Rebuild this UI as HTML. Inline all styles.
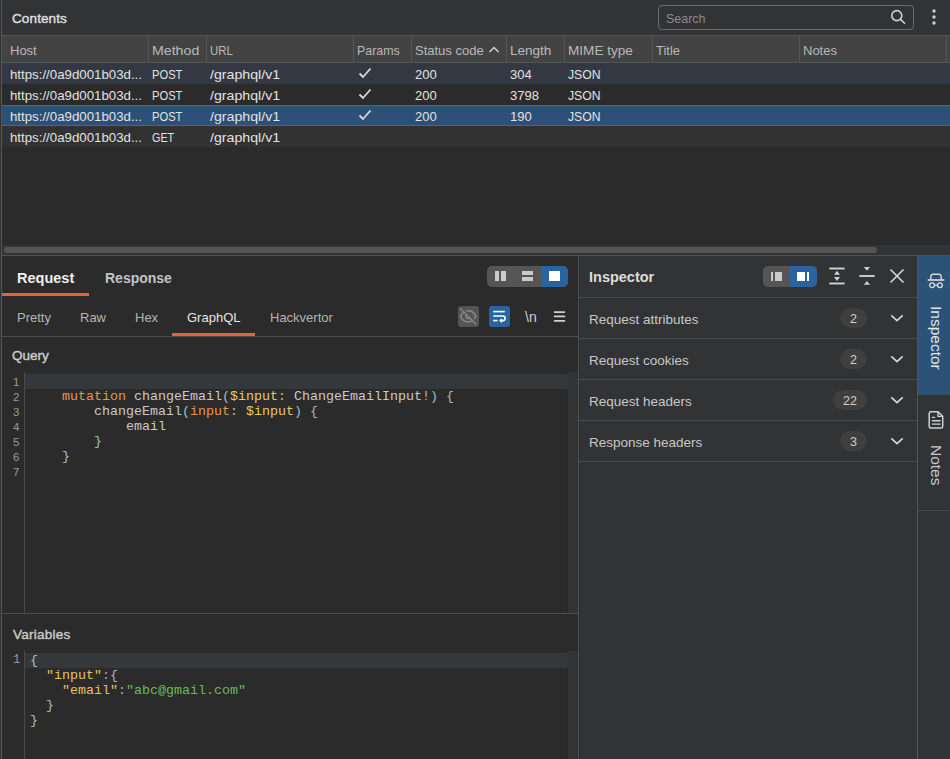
<!DOCTYPE html>
<html><head><meta charset="utf-8">
<style>
*{margin:0;padding:0;box-sizing:border-box}
html,body{width:950px;height:759px;overflow:hidden;background:#2b2b2b;font-family:"Liberation Sans",sans-serif;color:#d4d4d4}
.a{position:absolute}
.t{position:absolute;white-space:pre;line-height:1}
.sb{-webkit-text-stroke:0.45px currentColor}
.hl{position:absolute;background:#4a4a4a}
.vl{position:absolute;background:#4a4a4a}
.code{position:absolute;font-family:"Liberation Mono",monospace;font-size:13.33px;line-height:15px;white-space:pre;color:#c9c9c9}
.ln{position:absolute;font-family:"Liberation Sans",sans-serif;font-size:12px;line-height:15px;color:#9a9a9a;text-align:left}
.kw{color:#e9934f}
.var{color:#e9c86a}
.pn{color:#a6bacb}
.cg{color:#a8a8a8}
.key{color:#e8c062}
.str{color:#6db85c}
</style></head>
<body>
<!-- top bar -->
<div class="a" style="left:0;top:0;width:950px;height:35px;background:#323335"></div>
<div class="t sb" style="left:12px;top:12px;font-size:13.5px;letter-spacing:0.12px;color:#dcdcdc">Contents</div>
<div class="a" style="left:658px;top:5px;width:256px;height:25px;border:1px solid #6b6b6b;border-radius:4px"></div>
<div class="t" style="left:666px;top:12px;font-size:13px;color:#8c8c8c;transform:scaleX(0.96);transform-origin:0 0">Search</div>
<svg class="a" style="left:888px;top:8px" width="20" height="20" viewBox="0 0 20 20"><circle cx="8.8" cy="7.6" r="5" fill="none" stroke="#d0d0d0" stroke-width="1.6"/><line x1="12.6" y1="11.4" x2="17" y2="15.8" stroke="#d0d0d0" stroke-width="1.6"/></svg>
<svg class="a" style="left:930px;top:7px" width="8" height="20" viewBox="0 0 8 20"><g fill="#d0d0d0"><circle cx="4" cy="4" r="1.7"/><circle cx="4" cy="10" r="1.7"/><circle cx="4" cy="16" r="1.7"/></g></svg>

<!-- table header -->
<div class="a" style="left:2px;top:35px;width:948px;height:28px;background:#434343;border-top:1px solid #555;border-bottom:1px solid #555"></div>
<div class="vl" style="left:148px;top:36px;width:1px;height:26px;background:#555"></div>
<div class="vl" style="left:206px;top:36px;width:1px;height:26px;background:#555"></div>
<div class="vl" style="left:353px;top:36px;width:1px;height:26px;background:#555"></div>
<div class="vl" style="left:411px;top:36px;width:1px;height:26px;background:#555"></div>
<div class="vl" style="left:506px;top:36px;width:1px;height:26px;background:#555"></div>
<div class="vl" style="left:564px;top:36px;width:1px;height:26px;background:#555"></div>
<div class="vl" style="left:652px;top:36px;width:1px;height:26px;background:#555"></div>
<div class="vl" style="left:799px;top:36px;width:1px;height:26px;background:#555"></div>
<div class="vl" style="left:946px;top:36px;width:1px;height:26px;background:#555"></div>
<div style="position:absolute;left:0;top:44px;font-size:13px;color:#b9b9b9;line-height:1">
<span class="t" style="left:10px">Host</span>
<span class="t" style="left:152px;transform:scaleX(1.09);transform-origin:0 0">Method</span>
<span class="t" style="left:210px;transform:scaleX(0.88);transform-origin:0 0">URL</span>
<span class="t" style="left:357px;transform:scaleX(0.955);transform-origin:0 0">Params</span>
<span class="t" style="left:415px">Status code</span>
<span class="t" style="left:510px;transform:scaleX(1.04);transform-origin:0 0">Length</span>
<span class="t" style="left:568px;transform:scaleX(1.045);transform-origin:0 0">MIME type</span>
<span class="t" style="left:656px">Title</span>
<span class="t" style="left:803px">Notes</span>
</div>
<svg class="a" style="left:488px;top:45px" width="12" height="10" viewBox="0 0 12 10"><polyline points="1.5,7 6,2.5 10.5,7" fill="none" stroke="#d0d0d0" stroke-width="1.5"/></svg>

<!-- rows -->
<div class="a" style="left:2px;top:63px;width:948px;height:21px;background:#333843"></div>
<div class="a" style="left:2px;top:105px;width:948px;height:21px;background:#2c5078;border-top:1px solid #2f6cb0;border-bottom:1px solid #2f6cb0"></div>
<div class="a" style="left:2px;top:126px;width:948px;height:21px;background:#323232"></div>

<div style="position:absolute;left:0;top:68px;font-size:13px;color:#e2e2e2">
<span class="t" style="left:10px;top:0px;transform:scaleX(1.02);transform-origin:0 0">https://0a9d001b03d...</span><span class="t" style="left:152px;top:0px;transform:scaleX(0.86);transform-origin:0 0">POST</span><span class="t" style="left:210px;top:0px;transform:scaleX(1.09);transform-origin:0 0">/graphql/v1</span><span class="t" style="left:415px;top:0px">200</span><span class="t" style="left:510px;top:0px">304</span><span class="t" style="left:568px;top:0px;transform:scaleX(0.94);transform-origin:0 0">JSON</span>
<span class="t" style="left:10px;top:21px;transform:scaleX(1.02);transform-origin:0 0">https://0a9d001b03d...</span><span class="t" style="left:152px;top:21px;transform:scaleX(0.86);transform-origin:0 0">POST</span><span class="t" style="left:210px;top:21px;transform:scaleX(1.09);transform-origin:0 0">/graphql/v1</span><span class="t" style="left:415px;top:21px">200</span><span class="t" style="left:510px;top:21px">3798</span><span class="t" style="left:568px;top:21px;transform:scaleX(0.94);transform-origin:0 0">JSON</span>
<span class="t" style="left:10px;top:42px;transform:scaleX(1.02);transform-origin:0 0">https://0a9d001b03d...</span><span class="t" style="left:152px;top:42px;transform:scaleX(0.86);transform-origin:0 0">POST</span><span class="t" style="left:210px;top:42px;transform:scaleX(1.09);transform-origin:0 0">/graphql/v1</span><span class="t" style="left:415px;top:42px">200</span><span class="t" style="left:510px;top:42px">190</span><span class="t" style="left:568px;top:42px;transform:scaleX(0.94);transform-origin:0 0">JSON</span>
<span class="t" style="left:10px;top:63px;transform:scaleX(1.02);transform-origin:0 0">https://0a9d001b03d...</span><span class="t" style="left:152px;top:63px;transform:scaleX(0.83);transform-origin:0 0">GET</span><span class="t" style="left:210px;top:63px;transform:scaleX(1.09);transform-origin:0 0">/graphql/v1</span>
</div>
<svg class="a" style="left:358px;top:67px" width="14" height="12" viewBox="0 0 14 12"><polyline points="1.5,6.5 5,10 12.5,1.5" fill="none" stroke="#d8d8d8" stroke-width="1.8"/></svg>
<svg class="a" style="left:358px;top:88px" width="14" height="12" viewBox="0 0 14 12"><polyline points="1.5,6.5 5,10 12.5,1.5" fill="none" stroke="#d8d8d8" stroke-width="1.8"/></svg>
<svg class="a" style="left:358px;top:109px" width="14" height="12" viewBox="0 0 14 12"><polyline points="1.5,6.5 5,10 12.5,1.5" fill="none" stroke="#d8d8d8" stroke-width="1.8"/></svg>

<!-- scrollbar -->
<div class="a" style="left:2px;top:245px;width:948px;height:10px;background:#323335"></div>
<div class="a" style="left:4px;top:247px;width:873px;height:6px;border-radius:3px;background:#555"></div>

<!-- left border -->
<div class="a" style="left:0;top:0;width:1px;height:759px;background:#313235"></div><div class="a" style="left:1px;top:0;width:1px;height:759px;background:#555"></div>

<!-- horizontal divider -->
<div class="a" style="left:2px;top:255px;width:948px;height:1px;background:#4e4e4e"></div>

<!-- ===== Request panel ===== -->
<div class="t" style="left:17px;top:271px;font-size:14.5px;font-weight:700;color:#f0f0f0">Request</div>
<div class="t" style="left:105px;top:271px;font-size:14px;font-weight:700;color:#c0c4c8">Response</div>
<div class="a" style="left:2px;top:293px;width:87px;height:3px;background:#e0672f"></div>

<!-- layout toggle -->
<div class="a" style="left:487px;top:266px;width:81px;height:21px;border-radius:5px;background:#555;overflow:hidden">
  <div class="a" style="left:54px;top:0;width:27px;height:21px;background:#2a64a0"></div>
  <div class="a" style="left:8px;top:5px;width:4px;height:10px;background:#cacaca"></div>
  <div class="a" style="left:14px;top:5px;width:5px;height:10px;background:#cacaca"></div>
  <div class="a" style="left:35px;top:5px;width:11px;height:4px;background:#cacaca"></div>
  <div class="a" style="left:35px;top:11px;width:11px;height:4px;background:#cacaca"></div>
  <div class="a" style="left:62px;top:5px;width:11px;height:10px;background:#fff"></div>
</div>

<!-- sub tabs -->
<div style="position:absolute;left:0;top:311px;font-size:13px;color:#b4b4b4">
<span class="t" style="left:17px">Pretty</span>
<span class="t" style="left:80px">Raw</span>
<span class="t" style="left:135px">Hex</span>
<span class="t" style="left:187px;color:#e6e6e6">GraphQL</span>
<span class="t" style="left:270px">Hackvertor</span>
</div>
<div class="a" style="left:172px;top:333px;width:83px;height:3px;background:#e0672f"></div>
<div class="a" style="left:2px;top:336px;width:576px;height:1px;background:#4e4e4e"></div>

<!-- editor icons -->
<div class="a" style="left:458px;top:306px;width:21px;height:21px;border-radius:3px;background:#555"></div>
<svg class="a" style="left:458px;top:306px" width="21" height="21" viewBox="0 0 21 21"><g transform="translate(1.7,1.93) scale(0.7045)" fill="none" stroke="#8c8c8c" stroke-width="1.85" stroke-linecap="round" stroke-linejoin="round"><path d="M17.94 17.94A10.07 10.07 0 0 1 12 20c-7 0-11-8-11-8a18.45 18.45 0 0 1 5.06-5.940M9.9 4.24A9.12 9.12 0 0 1 12 4c7 0 11 8 11 8a18.5 18.5 0 0 1-2.16 3.19m-6.72-1.07a3 3 0 1 1-4.24-4.24"/><line x1="1" y1="1" x2="23" y2="23"/></g></svg>
<div class="a" style="left:489px;top:306px;width:21px;height:21px;border-radius:3px;background:#2a64a0"></div>
<svg class="a" style="left:489px;top:306px" width="21" height="21" viewBox="0 0 21 21"><g fill="none" stroke="#fff" stroke-width="1.6"><line x1="4.2" y1="5.6" x2="15.9" y2="5.6"/><path d="M4.2 10 H13.8 A2.3 2.3 0 0 1 13.8 14.6 H11.4"/><line x1="4.2" y1="14.6" x2="8.6" y2="14.6"/><polyline points="12.9,12.9 11.2,14.6 12.9,16.3" stroke-width="1.4"/></g></svg>
<div class="a" style="left:520px;top:306px;width:21px;height:21px;border:1px dashed #2f2f2f;border-radius:2px"></div><div class="t" style="left:525px;top:310px;font-size:14px;color:#d0d0d0">\n</div>
<svg class="a" style="left:552px;top:308px" width="16" height="16" viewBox="0 0 16 16"><g stroke="#d0d0d0" stroke-width="1.7" stroke-linecap="round"><line x1="2.6" y1="4.1" x2="12.4" y2="4.1"/><line x1="2.6" y1="8.4" x2="12.4" y2="8.4"/><line x1="2.6" y1="12.9" x2="12.4" y2="12.9"/></g></svg>

<!-- Query -->
<div class="t sb" style="left:12px;top:349px;font-size:13.5px;color:#c8c8c8">Query</div>
<div class="a" style="left:24px;top:372px;width:1px;height:241px;background:#4a4a4a"></div>
<div class="a" style="left:567px;top:372px;width:11px;height:241px;background:#323335;border-left:1px solid #282828"></div>
<div class="a" style="left:25px;top:374px;width:543px;height:15px;background:#34383b"></div>
<div class="ln" style="left:13px;top:375px;font-size:11.5px">1<br>2<br>3<br>4<br>5<br>6<br>7</div>
<div class="code" style="left:30px;top:374px">
    <span class="kw">mutation</span> changeEmail<span class="pn">(</span><span class="var">$input</span><span class="pn">:</span> ChangeEmailInput<span class="pn">!)</span> <span class="pn">{</span>
        changeEmail<span class="pn">(</span><span class="kw">input</span><span class="pn">:</span> <span class="var">$input</span><span class="pn">)</span> <span class="pn">{</span>
            email
        <span class="pn">}</span>
    <span class="pn">}</span>
</div>
<div class="a" style="left:2px;top:613px;width:576px;height:1px;background:#4e4e4e"></div>

<!-- Variables -->
<div class="t sb" style="left:13px;top:628px;font-size:13.5px;letter-spacing:0.25px;color:#c8c8c8">Variables</div>
<div class="a" style="left:24px;top:651px;width:1px;height:108px;background:#4a4a4a"></div>
<div class="a" style="left:567px;top:651px;width:11px;height:108px;background:#323335;border-left:1px solid #282828"></div>
<div class="a" style="left:25px;top:653px;width:543px;height:15px;background:#34383b"></div>
<div class="ln" style="left:13px;top:653px;font-family:'Liberation Mono',monospace;font-size:12px">1</div>
<div class="code" style="left:30px;top:653px"><span class="pn">{</span>
  <span class="key">"input"</span><span class="cg">:</span><span class="pn">{</span>
    <span class="key">"email"</span><span class="cg">:</span><span class="str">"abc@gmail.com"</span>
  <span class="pn">}</span>
<span class="pn">}</span></div>

<!-- vertical divider -->
<div class="a" style="left:578px;top:256px;width:1px;height:503px;background:#505050"></div>

<!-- ===== Inspector ===== -->
<div class="a" style="left:579px;top:256px;width:338px;height:503px;background:#323335;border-left:1px solid #2d2d2e"></div>
<div class="t" style="left:589px;top:270px;font-size:14.5px;font-weight:700;color:#dcdcdc">Inspector</div>
<div class="a" style="left:763px;top:266px;width:54px;height:21px;border-radius:5px;background:#555;overflow:hidden">
  <div class="a" style="left:27px;top:0;width:27px;height:21px;background:#2a64a0"></div>
  <div class="a" style="left:8px;top:6px;width:2px;height:9px;background:#cacaca"></div>
  <div class="a" style="left:12px;top:6px;width:7px;height:9px;background:#cacaca"></div>
  <div class="a" style="left:34px;top:6px;width:8px;height:9px;background:#fff"></div>
  <div class="a" style="left:44px;top:6px;width:2px;height:9px;background:#fff"></div>
</div>
<svg class="a" style="left:828px;top:266px" width="18" height="20" viewBox="0 0 18 20"><line x1="1.3" y1="2.5" x2="16.6" y2="2.5" stroke="#d0d0d0" stroke-width="1.9"/><line x1="1.3" y1="17.5" x2="16.6" y2="17.5" stroke="#d0d0d0" stroke-width="1.9"/><polygon points="9,4.8 12,8.7 6,8.7" fill="#d0d0d0"/><polygon points="6,11 12,11 9,14.9" fill="#d0d0d0"/></svg>
<svg class="a" style="left:858px;top:266px" width="18" height="20" viewBox="0 0 18 20"><line x1="1.4" y1="10" x2="16.7" y2="10" stroke="#d0d0d0" stroke-width="1.9"/><polygon points="5.8,1 12,1 8.9,4.8" fill="#d0d0d0"/><polygon points="8.9,14.9 12,18.7 5.8,18.7" fill="#d0d0d0"/></svg>
<svg class="a" style="left:888px;top:267px" width="18" height="18" viewBox="0 0 18 18"><line x1="2.5" y1="2.5" x2="15.5" y2="15.5" stroke="#d8d8d8" stroke-width="1.6"/><line x1="15.5" y1="2.5" x2="2.5" y2="15.5" stroke="#d8d8d8" stroke-width="1.6"/></svg>
<div class="a" style="left:579px;top:297px;width:338px;height:1px;background:#4a4a4a"></div>
<div class="a" style="left:579px;top:338px;width:338px;height:1px;background:#4a4a4a"></div>
<div class="a" style="left:579px;top:379px;width:338px;height:1px;background:#4a4a4a"></div>
<div class="a" style="left:579px;top:420px;width:338px;height:1px;background:#4a4a4a"></div>
<div class="a" style="left:579px;top:461px;width:338px;height:1px;background:#4a4a4a"></div>
<div style="position:absolute;left:0;top:0;font-size:13.5px;color:#c8c8c8">
<span class="t" style="left:589px;top:313px">Request attributes</span>
<span class="t" style="left:589px;top:354px">Request cookies</span>
<span class="t" style="left:589px;top:395px">Request headers</span>
<span class="t" style="left:589px;top:436px">Response headers</span>
</div>
<div class="a" style="left:840px;top:308px;width:27px;height:20px;border-radius:10px;background:#3f3f3f;color:#cfcfcf;font-size:12.5px;line-height:22px;text-align:center">2</div>
<div class="a" style="left:840px;top:349px;width:27px;height:20px;border-radius:10px;background:#3f3f3f;color:#cfcfcf;font-size:12.5px;line-height:22px;text-align:center">2</div>
<div class="a" style="left:833px;top:390px;width:34px;height:20px;border-radius:10px;background:#3f3f3f;color:#cfcfcf;font-size:12.5px;line-height:22px;text-align:center">22</div>
<div class="a" style="left:840px;top:431px;width:27px;height:20px;border-radius:10px;background:#3f3f3f;color:#cfcfcf;font-size:12.5px;line-height:22px;text-align:center">3</div>
<svg class="a" style="left:889px;top:312px" width="16" height="12" viewBox="0 0 16 12"><polyline points="2.3,3.4 8,8.7 13.7,3.4" fill="none" stroke="#d8d8d8" stroke-width="1.6"/></svg>
<svg class="a" style="left:889px;top:353px" width="16" height="12" viewBox="0 0 16 12"><polyline points="2.3,3.4 8,8.7 13.7,3.4" fill="none" stroke="#d8d8d8" stroke-width="1.6"/></svg>
<svg class="a" style="left:889px;top:394px" width="16" height="12" viewBox="0 0 16 12"><polyline points="2.3,3.4 8,8.7 13.7,3.4" fill="none" stroke="#d8d8d8" stroke-width="1.6"/></svg>
<svg class="a" style="left:889px;top:435px" width="16" height="12" viewBox="0 0 16 12"><polyline points="2.3,3.4 8,8.7 13.7,3.4" fill="none" stroke="#d8d8d8" stroke-width="1.6"/></svg>

<!-- ===== Right sidebar ===== -->
<div class="a" style="left:917px;top:256px;width:1px;height:503px;background:#555"></div>
<div class="a" style="left:918px;top:256px;width:32px;height:503px;background:#323335"></div>
<div class="a" style="left:918px;top:256px;width:32px;height:139px;background:#2d5278"></div>
<svg class="a" style="left:926px;top:272px" width="20" height="18" viewBox="0 0 20 18"><path d="M4.6 7.8 L4.9 4.4 Q5.1 2.3 7.1 2.3 H12.9 Q14.9 2.3 15.1 4.4 L15.4 7.8" fill="none" stroke="#d8d8d8" stroke-width="1.4"/><line x1="1.7" y1="8" x2="18.3" y2="8" stroke="#d8d8d8" stroke-width="1.7"/><circle cx="6.1" cy="13.2" r="2.4" fill="none" stroke="#d8d8d8" stroke-width="1.3"/><circle cx="13.9" cy="13.2" r="2.4" fill="none" stroke="#d8d8d8" stroke-width="1.3"/><line x1="8.4" y1="13.2" x2="11.6" y2="13.2" stroke="#d8d8d8" stroke-width="1.3"/></svg>
<div class="t" style="left:944px;top:306px;font-size:15.5px;color:#e4e4e4;transform-origin:0 0;transform:rotate(90deg)">Inspector</div>
<svg class="a" style="left:927px;top:410px" width="18" height="20" viewBox="0 0 18 20"><path d="M2.2 3.4 A1.7 1.7 0 0 1 3.9 1.7 H11 L15.7 6.4 V16.4 A1.7 1.7 0 0 1 14 18.1 H3.9 A1.7 1.7 0 0 1 2.2 16.4 Z" fill="none" stroke="#d0d0d0" stroke-width="1.5"/><path d="M11 1.7 V6.4 H15.7" fill="none" stroke="#d0d0d0" stroke-width="1.3"/><g stroke="#d0d0d0" stroke-width="1.4" stroke-linecap="round"><line x1="5.4" y1="7.4" x2="7.6" y2="7.4"/><line x1="5.4" y1="10.8" x2="13" y2="10.8"/><line x1="5.4" y1="14.1" x2="13" y2="14.1"/></g></svg>
<div class="t" style="left:944px;top:445px;font-size:15.5px;color:#c8c8c8;transform-origin:0 0;transform:rotate(90deg)">Notes</div>
<div class="a" style="left:918px;top:510px;width:32px;height:1px;background:#4a4a4a"></div>
</body></html>
